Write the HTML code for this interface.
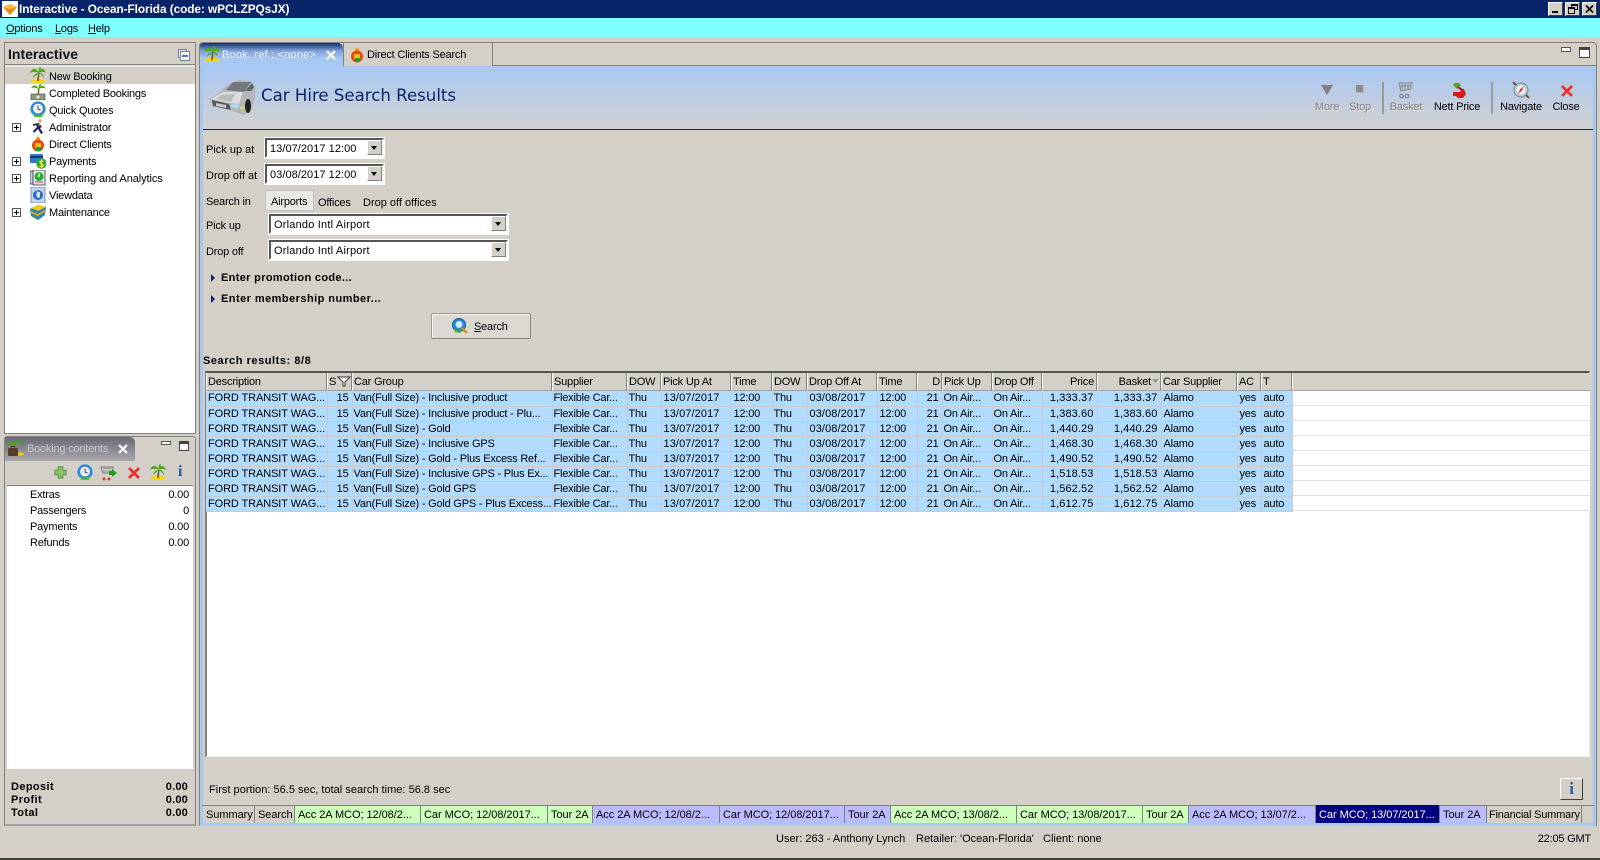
<!DOCTYPE html>
<html><head><meta charset="utf-8"><title>Interactive</title>
<style>
html,body{margin:0;padding:0;width:1600px;height:860px;overflow:hidden;background:#d4d0c8}
body{position:relative;font:11px/14px "Liberation Sans",sans-serif;color:#000;letter-spacing:-.2px}
.a{position:absolute;box-sizing:border-box}
.t{position:absolute;white-space:nowrap;line-height:14px;height:14px;margin-top:1px}
.b{font-weight:bold;letter-spacing:.38px}
svg.i{position:absolute;width:16px;height:16px;overflow:visible}
.fld{position:absolute;box-sizing:border-box;background:#fff;border:2px solid;border-color:#555 #fff #fff #555;outline:1px solid #fff;line-height:18px;padding-left:3px;white-space:nowrap;letter-spacing:.05px}
.dd{position:absolute;box-sizing:border-box;width:15px;height:15px;background:#d4d0c8;border:1px solid;border-color:#fff #808080 #808080 #fff}
.dd:after{content:"";position:absolute;left:3px;top:5px;border:3px solid transparent;border-top:4px solid #000;border-bottom:0}
.hd{position:absolute;top:373px;height:18px;box-sizing:border-box;background:#d4d0c8;border-left:1px solid #fff;border-right:1px solid #808080;border-bottom:1px solid #a0a0a0;line-height:19px;padding:0 1px;white-space:nowrap;overflow:hidden}
table{position:absolute;left:206px;top:391px;border-collapse:collapse;table-layout:fixed;width:1086px;background:#b2dcff}
td{height:15px;box-sizing:border-box;padding:1px 0 0 1px;border-right:1px solid #c8ccd0;border-bottom:1px solid #c8ccd0;white-space:nowrap;overflow:hidden;line-height:13px}
td.r{text-align:right;padding:1px 3px 0 0}
td:nth-child(1){padding-left:2px;letter-spacing:-.1px}
td:nth-child(6),td:nth-child(9){padding-left:2px;letter-spacing:.1px}
td:nth-child(7),td:nth-child(10){padding-left:2px}
td:nth-child(14),td:nth-child(15){letter-spacing:.1px}
td:nth-child(16),td:nth-child(17),td:nth-child(18){padding-left:2px}
.bt{position:absolute;top:806px;height:17px;box-sizing:border-box;border-right:1px solid #808080;text-align:left;padding-left:3px;line-height:18px;white-space:nowrap;overflow:hidden;letter-spacing:-.05px}
.g{background:#ccffbb}.v{background:#bbbbff}
.w{letter-spacing:0}
</style></head><body>
<svg width="0" height="0" style="position:absolute">
<defs>
<symbol id="palm" viewBox="0 0 16 16"><ellipse cx="8" cy="14" rx="7.500" ry="2" fill="#f5d800"/><path d="M8 6 L7 14 L9 14 L9.500 6Z" fill="#8a5a20"/><path d="M9 6 C6 0 2 1 0 6 C4 4 6 5 9 6Z M9 6 C11 0 14 1 16 6 C13 4 11 5 9 6Z M9 6 C8 2 9 0 11 0 C11 2 10 4 9 6Z M9 6 C6 6 3 8 3 11 C6 8 8 7 9 6Z M9 6 C12 6 14 8 14 11 C12 8 10 7 9 6Z" fill="#4aa81c"/></symbol>
<symbol id="money" viewBox="0 0 16 16"><path d="M8 5 L7.500 11 L9 11 L9.500 5Z" fill="#8a5a20"/><path d="M9 5 C6 0 3 1 1 4 C4 3 6 4 9 5Z M9 5 C11 0 14 1 16 5 C13 3 11 4 9 5Z M9 5 C8 1 9 0 11 0 C11 2 10 3 9 5Z" fill="#4aa81c"/><rect x="1" y="10" width="14" height="6" fill="#8d9a7a" stroke="#444" stroke-width=".6"/><circle cx="8" cy="13" r="1.600" fill="#e8e8d0"/></symbol>
<symbol id="clock" viewBox="0 0 16 16"><circle cx="8" cy="8" r="7.600" fill="#1f8fe8"/><circle cx="8" cy="7.600" r="5.200" fill="#eef0f4" stroke="#666" stroke-width=".5"/><path d="M8 4.500V8L10.500 9" stroke="#444" fill="none"/><path d="M3 12 C6 16 11 15 14 11 L12 16 L4 16Z" fill="#5cc21c"/></symbol>
<symbol id="run" viewBox="0 0 16 16"><circle cx="9" cy="2" r="1.600" fill="#d8a070"/><path d="M8 4L11 8L9 9L12 14L10 15L7 10L3 14L2 12L6 8L5 6L2 7L2 5Z" fill="#20205a"/><path d="M8 4L10 6L7 7Z" fill="#c8a030"/></symbol>
<symbol id="guy" viewBox="0 0 16 16"><circle cx="8" cy="3" r="2.200" fill="#f0a020"/><circle cx="8" cy="9.500" r="6" fill="#e84810"/><rect x="5" y="7" width="6" height="5" fill="#f0c018"/><rect x="6" y="11" width="5" height="4" fill="#18a048"/></symbol>
<symbol id="pay" viewBox="0 0 16 16"><rect x="0" y="1" width="13" height="9" rx="1" fill="#2a7ad0"/><rect x="0" y="3" width="13" height="2" fill="#123a70"/><circle cx="11.500" cy="10.500" r="5.200" fill="#30a830"/><path d="M13.500 8.500C12 7.500 9.800 8 10 9.500S13.500 11 13.300 12.500S10.500 13.800 9.500 12.800M11.500 6.500V15" stroke="#f0e040" fill="none" stroke-width="1.200"/></symbol>
<symbol id="rep" viewBox="0 0 16 16"><rect x="0" y="1" width="9" height="13" fill="#c8d0e0" stroke="#334" stroke-width=".8"/><rect x="3" y="0" width="12" height="15" fill="#dfe8e8" stroke="#334" stroke-width=".8"/><circle cx="9" cy="6.500" r="4.500" fill="#28b030"/><path d="M9 3.500V7" stroke="#fff" stroke-width="1.400"/><path d="M5 12H13" stroke="#d04040"/></symbol>
<symbol id="view" viewBox="0 0 16 16"><rect x="1" y="0" width="14" height="16" fill="#c4d4ec" stroke="#6880a0" stroke-width=".8"/><circle cx="8" cy="8" r="5" fill="#2868c8"/><path d="M6 4C8 6 5 8 7 10S10 11 10 8 11 6 9 5Z" fill="#d8e8f8"/></symbol>
<symbol id="cube" viewBox="0 0 16 16"><path d="M8 1L16 3L15 11L8 16L1 12L0 5Z" fill="#2a80c0"/><path d="M1 4L9 1L16 3L8 7Z" fill="#f0c818"/><path d="M1 7L8 10L15 6L15 8L8 12L1 9Z" fill="#e8a818"/><path d="M3 11L8 13V16L3 13Z" fill="#30a050"/></symbol>
<symbol id="case" viewBox="0 0 16 16"><ellipse cx="11" cy="14" rx="5" ry="1.600" fill="#f0d000"/><path d="M6 5C3 1 1 3 0 5M6 5C8 0 12 1 15 5M6 5C5 7 4 8 4 9" stroke="#48a018" stroke-width="2" fill="none"/><rect x="0" y="8" width="10" height="8" rx="1" fill="#5a3a28"/><rect x="3" y="6.500" width="4" height="2" fill="none" stroke="#5a3a28"/></symbol>
</defs></svg>

<!-- title -->
<div class="a" style="left:0;top:0;width:1600px;height:18px;background:#0a246a"></div>
<div class="a" style="left:2px;top:1px;width:16px;height:16px;background:#fff"></div>
<svg class="i" style="left:2px;top:1px" viewBox="0 0 16 16"><path d="M1 6L8 3L15 6L8 14Z" fill="#e88a10"/><path d="M1 6L8 3L15 6L8 8Z" fill="#f8c040"/></svg>
<div class="t b" style="left:19px;top:1px;color:#fff;font-size:11.800px;letter-spacing:-.05px">Interactive - Ocean-Florida (code: wPCLZPQsJX)</div>
<div class="a" style="left:1548px;top:2px;width:15px;height:14px;background:#d4d0c8;border:1px solid;border-color:#fff #404040 #404040 #fff"><div class="a" style="left:3px;top:8px;width:6px;height:2px;background:#000"></div></div>
<div class="a" style="left:1565px;top:2px;width:15px;height:14px;background:#d4d0c8;border:1px solid;border-color:#fff #404040 #404040 #fff"><div class="a" style="left:5px;top:1px;width:7px;height:6px;border:1px solid #000;border-top-width:2px"></div><div class="a" style="left:2px;top:4px;width:7px;height:7px;background:#d4d0c8;border:1px solid #000;border-top-width:2px"></div></div>
<div class="a" style="left:1582px;top:2px;width:15px;height:14px;background:#d4d0c8;border:1px solid;border-color:#fff #404040 #404040 #fff"><svg width="13" height="12" style="position:absolute;left:0;top:0"><path d="M3 2.500L10 9.500M10 2.500L3 9.500" stroke="#000" stroke-width="1.600"/></svg></div>

<!-- menu -->
<div class="a" style="left:0;top:18px;width:1600px;height:19px;background:#7fffff"></div>
<div class="t" style="left:6px;top:21px"><u>O</u>ptions</div>
<div class="t" style="left:55px;top:21px"><u>L</u>ogs</div>
<div class="t" style="left:88px;top:21px"><u>H</u>elp</div>

<!-- left panel -->
<div class="a" style="left:4px;top:42px;width:192px;height:392px;border:1px solid #808080;border-top-width:1px;background:#fff"></div>
<div class="a" style="left:5px;top:43px;width:190px;height:22px;background:#d4d0c8;border-bottom:1px solid #808080"></div>
<div class="a" style="left:5px;top:65px;width:190px;height:2px;background:#e8e6e0"></div>
<div class="t b" style="left:8px;top:45px;font-size:14px;line-height:16px;height:16px;color:#111;letter-spacing:0">Interactive</div>
<div class="a" style="left:178px;top:49px;width:9px;height:9px;border:1px solid #6888a8;background:#dde6f0"></div>
<div class="a" style="left:180px;top:51px;width:10px;height:10px;border:1px solid #6888a8;background:#fff"><div class="a" style="left:1px;top:3px;width:6px;height:2px;background:#607898"></div></div>
<div class="a" style="left:5px;top:67px;width:190px;height:17px;background:#d4d0c8"></div>
<svg class="i" style="left:30px;top:67px"><use href="#palm"/></svg><div class="t" style="left:49px;top:69px">New Booking</div>
<svg class="i" style="left:30px;top:84px"><use href="#money"/></svg><div class="t" style="left:49px;top:86px;letter-spacing:-.25px">Completed Bookings</div>
<svg class="i" style="left:30px;top:101px"><use href="#clock"/></svg><div class="t" style="left:49px;top:103px">Quick Quotes</div>
<svg class="i" style="left:31px;top:119px"><use href="#run"/></svg><div class="t" style="left:49px;top:120px">Administrator</div>
<svg class="i" style="left:30px;top:136px"><use href="#guy"/></svg><div class="t" style="left:49px;top:137px">Direct Clients</div>
<svg class="i" style="left:30px;top:153px"><use href="#pay"/></svg><div class="t" style="left:49px;top:154px">Payments</div>
<svg class="i" style="left:30px;top:170px"><use href="#rep"/></svg><div class="t" style="left:49px;top:171px;letter-spacing:-.08px">Reporting and Analytics</div>
<svg class="i" style="left:30px;top:187px"><use href="#view"/></svg><div class="t" style="left:49px;top:188px">Viewdata</div>
<svg class="i" style="left:30px;top:204px"><use href="#cube"/></svg><div class="t" style="left:49px;top:205px">Maintenance</div>
<svg width="9" height="9" style="position:absolute;left:12px;top:123px"><path d="M.5.500h8v8h-8z" fill="#fff" stroke="#555"/><path d="M2 4.500h5M4.500 2v5" stroke="#000"/></svg>
<svg width="9" height="9" style="position:absolute;left:12px;top:157px"><path d="M.5.500h8v8h-8z" fill="#fff" stroke="#555"/><path d="M2 4.500h5M4.500 2v5" stroke="#000"/></svg>
<svg width="9" height="9" style="position:absolute;left:12px;top:174px"><path d="M.5.500h8v8h-8z" fill="#fff" stroke="#555"/><path d="M2 4.500h5M4.500 2v5" stroke="#000"/></svg>
<svg width="9" height="9" style="position:absolute;left:12px;top:208px"><path d="M.5.500h8v8h-8z" fill="#fff" stroke="#555"/><path d="M2 4.500h5M4.500 2v5" stroke="#000"/></svg>

<!-- booking panel -->
<div class="a" style="left:4px;top:436px;width:192px;height:390px;border:1px solid #808080;background:#d4d0c8;border-radius:3px 3px 0 0;border-bottom:2px solid #a0a0a0"></div>
<div class="a" style="left:5px;top:437px;width:130px;height:24px;background:linear-gradient(#6a6a78,#a8a8ac);border-radius:2px 5px 0 0"></div>
<svg class="i" style="left:8px;top:440px"><use href="#case"/></svg>
<div class="t" style="left:27px;top:441px;color:#c8c8c8">Booking contents</div>
<svg width="10" height="10" style="position:absolute;left:118px;top:444px"><path d="M1 1L9 9M9 1L1 9" stroke="#fff" stroke-width="2.200"/></svg>
<div class="a" style="left:161px;top:441px;width:10px;height:4px;background:#fff;border:1px solid #555"></div>
<div class="a" style="left:179px;top:441px;width:10px;height:10px;background:#fff;border:1px solid #444;border-top-width:3px"></div>
<div class="a" style="left:7px;top:461px;width:186px;height:25px;background:#d4d0c8;border-bottom:1px solid #808080"></div>
<svg class="i" style="left:53px;top:465px;width:15px;height:15px" viewBox="0 0 16 16"><path d="M5.500 2h5v3.500H14v5h-3.500V14h-5v-3.500H2v-5h3.500z" fill="#8cc070" stroke="#5a9040"/></svg>
<svg class="i" style="left:77px;top:464px"><use href="#clock"/></svg>
<svg class="i" style="left:101px;top:465px" viewBox="0 0 16 16"><path d="M0 2H12L11 8H2Z" fill="none" stroke="#777"/><path d="M2 3.500H11M2 6H11" stroke="#999"/><circle cx="3" cy="14" r="1.500" fill="#e03030"/><circle cx="8" cy="14" r="1.500" fill="#e03030"/><path d="M8 6h3v-2l5 4l-5 4v-2h-3z" fill="#20a020"/></svg>
<svg class="i" style="left:126px;top:465px" viewBox="0 0 16 16"><path d="M2 4L4 2L8 6L12 2L14 4L10 8L14 12L12 14L8 10L4 14L2 12L6 8Z" fill="#e83030"/></svg>
<svg class="i" style="left:150px;top:464px"><use href="#palm"/></svg>
<div class="t b" style="left:178px;top:463px;color:#1a5fa0;font:bold 16px/16px 'Liberation Serif',serif;height:16px">i</div>
<div class="a" style="left:7px;top:486px;width:186px;height:283px;background:#fff"></div>
<div class="t" style="left:30px;top:487px">Extras</div><div class="t" style="right:1411px;top:487px">0.00</div>
<div class="t" style="left:30px;top:503px">Passengers</div><div class="t" style="right:1411px;top:503px">0</div>
<div class="t" style="left:30px;top:519px">Payments</div><div class="t" style="right:1411px;top:519px">0.00</div>
<div class="t" style="left:30px;top:535px">Refunds</div><div class="t" style="right:1411px;top:535px">0.00</div>
<div class="t b" style="left:11px;top:779px">Deposit</div><div class="t b" style="right:1412px;top:779px;letter-spacing:.2px">0.00</div>
<div class="t b" style="left:11px;top:792px">Profit</div><div class="t b" style="right:1412px;top:792px;letter-spacing:.2px">0.00</div>
<div class="t b" style="left:11px;top:805px">Total</div><div class="t b" style="right:1412px;top:805px;letter-spacing:.2px">0.00</div>

<!-- main panel -->
<div class="a" style="left:199px;top:42px;width:1398px;height:784px;border:1px solid #808080;border-bottom:0;border-radius:4px 4px 0 0;background:#d4d0c8"></div>
<div class="a" style="left:200px;top:65px;width:1396px;height:1px;background:#808080"></div>
<div class="a" style="left:200px;top:66px;width:1396px;height:63px;background:linear-gradient(#a8c8f4,#d2d2d0)"></div>
<div class="a" style="left:202px;top:129px;width:1392px;height:1px;background:#0a246a"></div>
<div class="a" style="left:200px;top:66px;width:3px;height:760px;background:#a8c8f4"></div>
<div class="a" style="left:1593px;top:66px;width:3px;height:760px;background:#a8c8f4"></div>
<div class="a" style="left:200px;top:823px;width:1396px;height:3px;background:#a8c8f4"></div>
<!-- tabs -->
<div class="a" style="left:200px;top:43px;width:143px;height:24px;background:linear-gradient(#0f2d72,#7f9fd8 32%,#a8c8f4 65%);border-radius:3px 5px 0 0"></div>
<svg class="i" style="left:204px;top:46px"><use href="#palm"/></svg>
<div class="t" style="left:222px;top:47px;color:#eef2fa;letter-spacing:.2px">Book. ref.: &lt;none&gt;</div>
<svg width="10" height="10" style="position:absolute;left:326px;top:50px"><path d="M1 1L9 9M9 1L1 9" stroke="#fff" stroke-width="2.200"/></svg>
<div class="a" style="left:343px;top:43px;width:150px;height:23px;background:#d4d0c8;border-right:1px solid #808080;border-left:1px solid #808080"></div>
<svg class="i" style="left:349px;top:47px"><use href="#guy"/></svg>
<div class="t" style="left:367px;top:47px">Direct Clients Search</div>
<div class="a" style="left:1561px;top:47px;width:10px;height:5px;background:#fff;border:1px solid #555"></div>
<div class="a" style="left:1579px;top:47px;width:11px;height:11px;background:#fff;border:1px solid #444;border-top-width:3px"></div>
<!-- header -->
<svg style="position:absolute;left:207px;top:79px" width="50" height="36" viewBox="0 0 50 36"><path d="M2 20L12 14L20 6L30 1L44 2L48 8L48 20L44 32L36 36L26 32L6 27Z" fill="#b4b6b8"/><path d="M4 20L16 13L36 13L32 25L22 24Z" fill="#dcdcdc"/><path d="M14 16L28 15L24 23L9 20Z" fill="#bcbcbc"/><path d="M19 11L26 3L44 3L37 13Z" fill="#74787c"/><path d="M38 12L45 4L47 8L44 12Z" fill="#60686c"/><path d="M5 21L22 25L24 31L6 27Z" fill="#55585c"/><path d="M9 24L19 26L19 29L9 27Z" fill="#c8c8c8"/><ellipse cx="28" cy="27" rx="4" ry="1.800" fill="#a8e0ff"/><circle cx="35" cy="29" r="1.800" fill="#e8e040"/><ellipse cx="41" cy="27" rx="3" ry="7" fill="#222"/></svg>
<div class="t" style="left:261px;top:85px;height:20px;font:16.600px/20px 'DejaVu Sans',sans-serif;color:#0a246a;letter-spacing:0">Car Hire Search Results</div>
<svg class="i" style="left:1319px;top:82px" viewBox="0 0 16 16"><path d="M2 3H14L8 13Z" fill="#808080"/></svg>
<div class="a" style="left:1356px;top:85px;width:8px;height:8px;background:#8c8c8c;border-right:1px solid #bbb;border-bottom:1px solid #bbb"></div>
<div class="a" style="left:1382px;top:82px;width:2px;height:32px;background:#9a9a9a"></div>
<svg class="i" style="left:1398px;top:82px" viewBox="0 0 16 16"><path d="M1 1H13V7L3 9ZM13 1L15 0" fill="none" stroke="#8a8a8a"/><path d="M4 1V8M7 1V8M10 1V7M2 4H13" stroke="#8a8a8a"/><circle cx="3.500" cy="14" r="1.800" fill="none" stroke="#777"/><circle cx="9" cy="14" r="1.800" fill="none" stroke="#777"/></svg>
<svg class="i" style="left:1450px;top:82px" viewBox="0 0 16 16"><path d="M3 3C5 0 9 0 11 3L7 7Z" fill="#5ca028"/><path d="M3 10H10L12 7H14L16 12L13 16H8L6 14H3Z" fill="#e01818"/><path d="M8 5L12 8" stroke="#a01010" stroke-width="2"/></svg>
<div class="a" style="left:1491px;top:82px;width:2px;height:32px;background:#9a9a9a"></div>
<svg class="i" style="left:1513px;top:82px" viewBox="0 0 16 16"><circle cx="8" cy="8" r="7" fill="#b8ccdc" stroke="#808890"/><circle cx="8" cy="8" r="4.500" fill="#eef2f6"/><path d="M11 4L8.800 8.800L5 12L7.200 7.200Z" fill="#e03020"/><path d="M0 0L3 3M13 13L16 16" stroke="#705030" stroke-width="2"/></svg>
<svg class="i" style="left:1559px;top:83px" viewBox="0 0 16 16"><path d="M2 4L4 2L8 6L12 2L14 4L10 8L14 12L12 14L8 10L4 14L2 12L6 8Z" fill="#e83030" stroke="#f09090" stroke-width=".5"/></svg>
<div class="t" style="left:1327px;top:99px;transform:translateX(-50%);color:#808080;text-shadow:1px 1px #e6e6e6">More</div>
<div class="t" style="left:1360px;top:99px;transform:translateX(-50%);color:#808080;text-shadow:1px 1px #e6e6e6">Stop</div>
<div class="t" style="left:1406px;top:99px;transform:translateX(-50%);color:#808080;text-shadow:1px 1px #e6e6e6">Basket</div>
<div class="t" style="left:1457px;top:99px;transform:translateX(-50%)">Nett Price</div>
<div class="t" style="left:1521px;top:99px;transform:translateX(-50%)">Navigate</div>
<div class="t" style="left:1566px;top:99px;transform:translateX(-50%)">Close</div>
<!-- form -->
<div class="t w" style="left:206px;top:142px">Pick up at</div>
<div class="fld" style="left:265px;top:138px;width:119px;height:20px">13/07/2017 12:00</div><div class="dd" style="left:367px;top:140px"></div>
<div class="t w" style="left:206px;top:168px">Drop off at</div>
<div class="fld" style="left:265px;top:164px;width:119px;height:20px">03/08/2017 12:00</div><div class="dd" style="left:367px;top:166px"></div>
<div class="t" style="left:206px;top:194px">Search in</div>
<div class="a" style="left:265px;top:190px;width:49px;height:21px;background:#eae8e4;border:1px solid;border-color:#fff #fff #a0a0a0 #a0a0a0;line-height:22px;padding-left:5px;outline:1px solid #c0c0c0;outline-offset:-1px">Airports</div>
<div class="t" style="left:318px;top:195px">Offices</div>
<div class="t w" style="left:363px;top:195px">Drop off offices</div>
<div class="t" style="left:206px;top:218px">Pick up</div>
<div class="fld" style="left:269px;top:214px;width:239px;height:20px;letter-spacing:.2px">Orlando Intl Airport</div><div class="dd" style="left:491px;top:216px"></div>
<div class="t" style="left:206px;top:244px">Drop off</div>
<div class="fld" style="left:269px;top:240px;width:239px;height:20px;letter-spacing:.2px">Orlando Intl Airport</div><div class="dd" style="left:491px;top:242px"></div>
<div class="a" style="left:211px;top:274px;border:4px solid transparent;border-left:4px solid #0a246a;border-right:0"></div>
<div class="t b" style="left:221px;top:270px;letter-spacing:.33px">Enter promotion code...</div>
<div class="a" style="left:211px;top:295px;border:4px solid transparent;border-left:4px solid #0a246a;border-right:0"></div>
<div class="t b" style="left:221px;top:291px;letter-spacing:.45px">Enter membership number...</div>
<div class="a" style="left:431px;top:313px;width:100px;height:26px;background:#dcd8d2;border:1px solid #999;border-right-color:#888;border-bottom-color:#888;border-radius:2px;box-shadow:inset 1px 1px #f4f2ee"></div>
<svg class="i" style="left:452px;top:318px" viewBox="0 0 16 16"><circle cx="7" cy="7" r="6.500" fill="#2a86d8" stroke="#185898"/><circle cx="7" cy="6.500" r="3.500" fill="#cfe8f8"/><path d="M10 10L15 15" stroke="#c89818" stroke-width="2.400"/><path d="M2 10C5 13 8 13 10 12L8 15 3 14Z" fill="#48b028"/></svg>
<div class="t" style="left:474px;top:319px"><u>S</u>earch</div>
<div class="t b" style="left:203px;top:353px;letter-spacing:.55px">Search results: 8/8</div>
<!-- grid -->
<div class="a" style="left:205px;top:371px;width:1385px;height:386px;background:#fff;border-top:2px solid #555;border-left:2px solid #808080;border-right:1px solid #eee;border-bottom:1px solid #eee"></div>
<div class="hd" style="left:206px;width:121px">Description</div>
<div class="hd" style="left:327px;width:25px">S<svg width="14" height="11" style="position:absolute;left:9px;top:3px"><path d="M1 1H13L8 6V10L6 10V6Z" fill="#fff" stroke="#333"/></svg></div>
<div class="hd" style="left:352px;width:200px">Car Group</div>
<div class="hd" style="left:552px;width:75px">Supplier</div>
<div class="hd" style="left:627px;width:34px">DOW</div>
<div class="hd" style="left:661px;width:70px">Pick Up At</div>
<div class="hd" style="left:731px;width:41px">Time</div>
<div class="hd" style="left:772px;width:35px">DOW</div>
<div class="hd" style="left:807px;width:70px">Drop Off At</div>
<div class="hd" style="left:877px;width:40px">Time</div>
<div class="hd" style="left:917px;width:25px;text-align:right">D</div>
<div class="hd" style="left:942px;width:50px">Pick Up</div>
<div class="hd" style="left:992px;width:50px">Drop Off</div>
<div class="hd" style="left:1042px;width:55px;text-align:right;padding-right:2px">Price</div>
<div class="hd" style="left:1097px;width:64px;text-align:right;padding-right:9px">Basket<svg width="7" height="5" style="position:absolute;right:1px;top:6px"><path d="M0 0H7L3.500 4Z" fill="#999"/></svg></div>
<div class="hd" style="left:1161px;width:76px">Car Supplier</div>
<div class="hd" style="left:1237px;width:24px">AC</div>
<div class="hd" style="left:1261px;width:31px">T</div>
<div class="hd" style="left:1292px;width:298px;border-right:0"></div>
<div class="a" style="left:1292px;top:391px;width:298px;height:120px;background:repeating-linear-gradient(#fff 0 14px,#e0e0e0 14px 15px)"></div>
<table><colgroup><col style="width:121px"><col style="width:25px"><col style="width:200px"><col style="width:75px"><col style="width:34px"><col style="width:70px"><col style="width:41px"><col style="width:35px"><col style="width:70px"><col style="width:40px"><col style="width:25px"><col style="width:50px"><col style="width:50px"><col style="width:55px"><col style="width:64px"><col style="width:76px"><col style="width:24px"><col style="width:31px"></colgroup>
<tr><td>FORD TRANSIT WAG...</td><td class="r">15</td><td>Van(Full Size) - Inclusive product</td><td>Flexible Car...</td><td>Thu</td><td>13/07/2017</td><td>12:00</td><td>Thu</td><td>03/08/2017</td><td>12:00</td><td class="r">21</td><td>On Air...</td><td>On Air...</td><td class="r">1,333.37</td><td class="r">1,333.37</td><td>Alamo</td><td>yes</td><td>auto</td></tr>
<tr><td>FORD TRANSIT WAG...</td><td class="r">15</td><td>Van(Full Size) - Inclusive product - Plu...</td><td>Flexible Car...</td><td>Thu</td><td>13/07/2017</td><td>12:00</td><td>Thu</td><td>03/08/2017</td><td>12:00</td><td class="r">21</td><td>On Air...</td><td>On Air...</td><td class="r">1,383.60</td><td class="r">1,383.60</td><td>Alamo</td><td>yes</td><td>auto</td></tr>
<tr><td>FORD TRANSIT WAG...</td><td class="r">15</td><td>Van(Full Size) - Gold</td><td>Flexible Car...</td><td>Thu</td><td>13/07/2017</td><td>12:00</td><td>Thu</td><td>03/08/2017</td><td>12:00</td><td class="r">21</td><td>On Air...</td><td>On Air...</td><td class="r">1,440.29</td><td class="r">1,440.29</td><td>Alamo</td><td>yes</td><td>auto</td></tr>
<tr><td>FORD TRANSIT WAG...</td><td class="r">15</td><td>Van(Full Size) - Inclusive GPS</td><td>Flexible Car...</td><td>Thu</td><td>13/07/2017</td><td>12:00</td><td>Thu</td><td>03/08/2017</td><td>12:00</td><td class="r">21</td><td>On Air...</td><td>On Air...</td><td class="r">1,468.30</td><td class="r">1,468.30</td><td>Alamo</td><td>yes</td><td>auto</td></tr>
<tr><td>FORD TRANSIT WAG...</td><td class="r">15</td><td>Van(Full Size) - Gold - Plus Excess Ref...</td><td>Flexible Car...</td><td>Thu</td><td>13/07/2017</td><td>12:00</td><td>Thu</td><td>03/08/2017</td><td>12:00</td><td class="r">21</td><td>On Air...</td><td>On Air...</td><td class="r">1,490.52</td><td class="r">1,490.52</td><td>Alamo</td><td>yes</td><td>auto</td></tr>
<tr><td>FORD TRANSIT WAG...</td><td class="r">15</td><td>Van(Full Size) - Inclusive GPS - Plus Ex...</td><td>Flexible Car...</td><td>Thu</td><td>13/07/2017</td><td>12:00</td><td>Thu</td><td>03/08/2017</td><td>12:00</td><td class="r">21</td><td>On Air...</td><td>On Air...</td><td class="r">1,518.53</td><td class="r">1,518.53</td><td>Alamo</td><td>yes</td><td>auto</td></tr>
<tr><td>FORD TRANSIT WAG...</td><td class="r">15</td><td>Van(Full Size) - Gold GPS</td><td>Flexible Car...</td><td>Thu</td><td>13/07/2017</td><td>12:00</td><td>Thu</td><td>03/08/2017</td><td>12:00</td><td class="r">21</td><td>On Air...</td><td>On Air...</td><td class="r">1,562.52</td><td class="r">1,562.52</td><td>Alamo</td><td>yes</td><td>auto</td></tr>
<tr><td>FORD TRANSIT WAG...</td><td class="r">15</td><td>Van(Full Size) - Gold GPS - Plus Excess...</td><td>Flexible Car...</td><td>Thu</td><td>13/07/2017</td><td>12:00</td><td>Thu</td><td>03/08/2017</td><td>12:00</td><td class="r">21</td><td>On Air...</td><td>On Air...</td><td class="r">1,612.75</td><td class="r">1,612.75</td><td>Alamo</td><td>yes</td><td>auto</td></tr>
</table>
<!-- footer -->
<div class="t" style="left:209px;top:782px;letter-spacing:.02px">First portion: 56.5 sec, total search time: 56.8 sec</div>
<div class="a" style="left:1560px;top:778px;width:23px;height:22px;background:#d4d0c8;border:1px solid;border-color:#fff #404040 #404040 #fff;text-align:center;font:bold 17px/20px 'Liberation Serif',serif;color:#1a5fa0">i</div>
<div class="a" style="left:202px;top:805px;width:1392px;height:1px;background:#808080"></div>
<div class="bt" style="left:203px;width:52px">Summary</div>
<div class="bt" style="left:255px;width:40px">Search</div>
<div class="bt g" style="left:295px;width:126px">Acc 2A MCO; 12/08/2...</div>
<div class="bt g" style="left:421px;width:127px">Car MCO; 12/08/2017...</div>
<div class="bt g" style="left:548px;width:45px">Tour 2A</div>
<div class="bt v" style="left:593px;width:127px">Acc 2A MCO; 12/08/2...</div>
<div class="bt v" style="left:720px;width:125px">Car MCO; 12/08/2017...</div>
<div class="bt v" style="left:845px;width:46px">Tour 2A</div>
<div class="bt g" style="left:891px;width:126px">Acc 2A MCO; 13/08/2...</div>
<div class="bt g" style="left:1017px;width:126px">Car MCO; 13/08/2017...</div>
<div class="bt g" style="left:1143px;width:46px">Tour 2A</div>
<div class="bt v" style="left:1189px;width:127px">Acc 2A MCO; 13/07/2...</div>
<div class="bt" style="left:1316px;width:124px;background:#000080;color:#fff;top:805px;height:18px;line-height:20px">Car MCO; 13/07/2017...</div>
<div class="bt v" style="left:1440px;width:47px">Tour 2A</div>
<div class="bt" style="left:1487px;width:95px;padding-left:2px;letter-spacing:-.2px">Financial Summary</div>
<!-- status -->
<div class="t w" style="left:776px;top:831px">User: 263 - Anthony Lynch</div>
<div class="t w" style="left:916px;top:831px">Retailer: 'Ocean-Florida'</div>
<div class="t w" style="left:1043px;top:831px">Client: none</div>
<div class="t" style="right:9px;top:831px">22:05 GMT</div>
<div class="a" style="left:0;top:858px;width:1600px;height:2px;background:#404040"></div>
</body></html>
